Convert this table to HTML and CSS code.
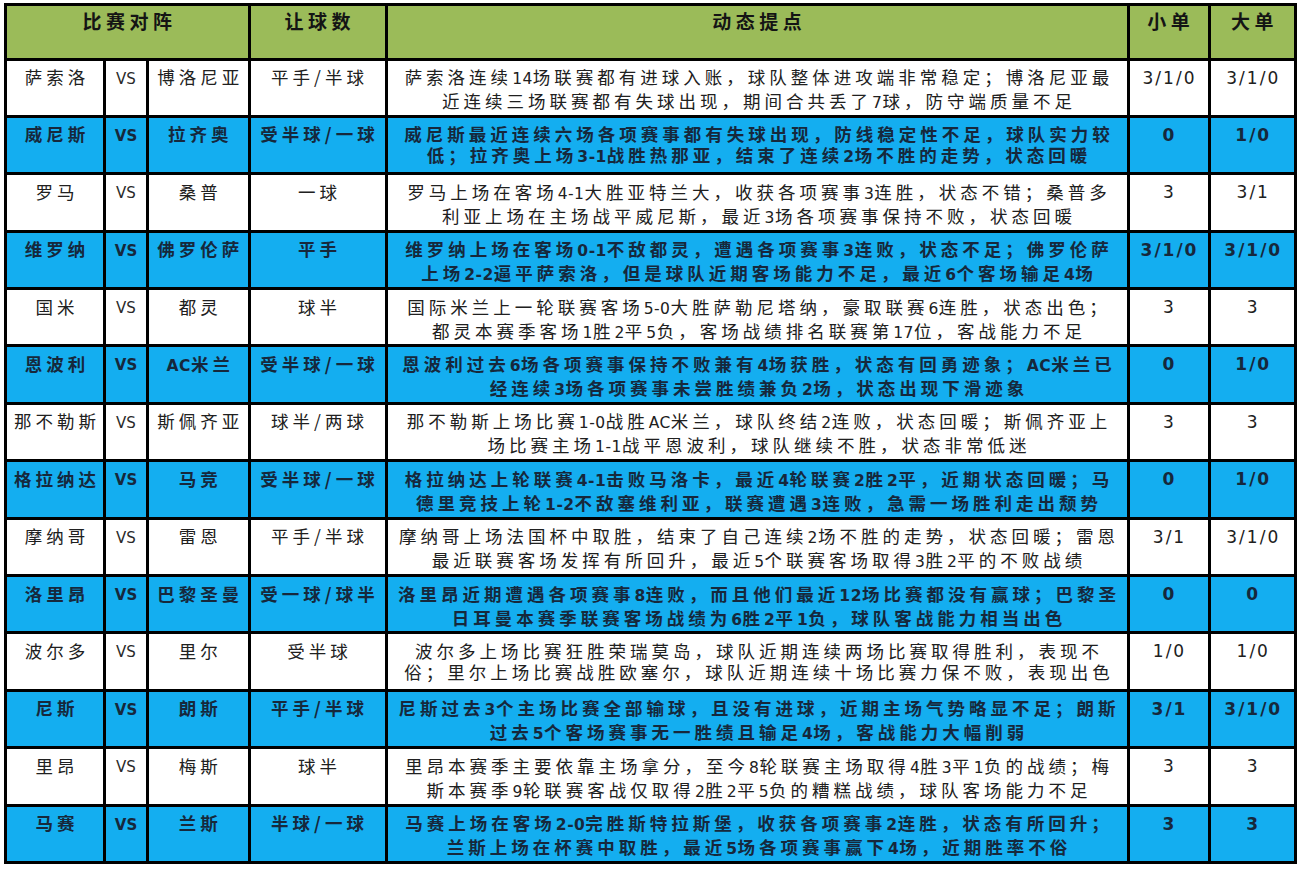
FILE: index.html
```html
<!DOCTYPE html>
<html lang="zh-CN">
<head>
<meta charset="utf-8">
<title>比赛对阵</title>
<link rel="stylesheet" href="styles.css">
</head>
<body>
<div class="board">
  <div class="row head">
    <div class="cell span3">比赛对阵</div>
    <div class="cell">让球数</div>
    <div class="cell">动态提点</div>
    <div class="cell">小单</div>
    <div class="cell">大单</div>
  </div>

  <div class="row white">
    <div class="cell">萨索洛</div><div class="cell vs">VS</div><div class="cell">博洛尼亚</div><div class="cell">平手/半球</div>
    <div class="cell desc"><span>萨索洛连续<i>14</i>场联赛都有进球入账，球队整体进攻端非常稳定；博洛尼亚最</span><span>近连续三场联赛都有失球出现，期间合共丢了<i>7</i>球，防守端质量不足</span></div>
    <div class="cell num">3/1/0</div><div class="cell num">3/1/0</div>
  </div>

  <div class="row blue">
    <div class="cell">威尼斯</div><div class="cell vs">VS</div><div class="cell">拉齐奥</div><div class="cell">受半球/一球</div>
    <div class="cell desc"><span>威尼斯最近连续六场各项赛事都有失球出现，防线稳定性不足，球队实力较</span><span>低；拉齐奥上场<i>3-1</i>战胜热那亚，结束了连续<i>2</i>场不胜的走势，状态回暖</span></div>
    <div class="cell num">0</div><div class="cell num">1/0</div>
  </div>

  <div class="row white">
    <div class="cell">罗马</div><div class="cell vs">VS</div><div class="cell">桑普</div><div class="cell">一球</div>
    <div class="cell desc"><span>罗马上场在客场<i>4-1</i>大胜亚特兰大，收获各项赛事<i>3</i>连胜，状态不错；桑普多</span><span>利亚上场在主场战平威尼斯，最近<i>3</i>场各项赛事保持不败，状态回暖</span></div>
    <div class="cell num">3</div><div class="cell num">3/1</div>
  </div>

  <div class="row blue">
    <div class="cell">维罗纳</div><div class="cell vs">VS</div><div class="cell">佛罗伦萨</div><div class="cell">平手</div>
    <div class="cell desc"><span>维罗纳上场在客场<i>0-1</i>不敌都灵，遭遇各项赛事<i>3</i>连败，状态不足；佛罗伦萨</span><span>上场<i>2-2</i>逼平萨索洛，但是球队近期客场能力不足，最近<i>6</i>个客场输足<i>4</i>场</span></div>
    <div class="cell num">3/1/0</div><div class="cell num">3/1/0</div>
  </div>

  <div class="row white">
    <div class="cell">国米</div><div class="cell vs">VS</div><div class="cell">都灵</div><div class="cell">球半</div>
    <div class="cell desc"><span>国际米兰上一轮联赛客场<i>5-0</i>大胜萨勒尼塔纳，豪取联赛<i>6</i>连胜，状态出色；</span><span>都灵本赛季客场<i>1</i>胜<i>2</i>平<i>5</i>负，客场战绩排名联赛第<i>17</i>位，客战能力不足</span></div>
    <div class="cell num">3</div><div class="cell num">3</div>
  </div>

  <div class="row blue">
    <div class="cell">恩波利</div><div class="cell vs">VS</div><div class="cell"><i>AC</i>米兰</div><div class="cell">受半球/一球</div>
    <div class="cell desc"><span>恩波利过去<i>6</i>场各项赛事保持不败兼有<i>4</i>场获胜，状态有回勇迹象；<i>AC</i>米兰已</span><span>经连续<i>3</i>场各项赛事未尝胜绩兼负<i>2</i>场，状态出现下滑迹象</span></div>
    <div class="cell num">0</div><div class="cell num">1/0</div>
  </div>

  <div class="row white">
    <div class="cell">那不勒斯</div><div class="cell vs">VS</div><div class="cell">斯佩齐亚</div><div class="cell">球半/两球</div>
    <div class="cell desc"><span>那不勒斯上场比赛<i>1-0</i>战胜<i>AC</i>米兰，球队终结<i>2</i>连败，状态回暖；斯佩齐亚上</span><span>场比赛主场<i>1-1</i>战平恩波利，球队继续不胜，状态非常低迷</span></div>
    <div class="cell num">3</div><div class="cell num">3</div>
  </div>

  <div class="row blue">
    <div class="cell">格拉纳达</div><div class="cell vs">VS</div><div class="cell">马竞</div><div class="cell">受半球/一球</div>
    <div class="cell desc"><span>格拉纳达上轮联赛<i>4-1</i>击败马洛卡，最近<i>4</i>轮联赛<i>2</i>胜<i>2</i>平，近期状态回暖；马</span><span>德里竞技上轮<i>1-2</i>不敌塞维利亚，联赛遭遇<i>3</i>连败，急需一场胜利走出颓势</span></div>
    <div class="cell num">0</div><div class="cell num">1/0</div>
  </div>

  <div class="row white">
    <div class="cell">摩纳哥</div><div class="cell vs">VS</div><div class="cell">雷恩</div><div class="cell">平手/半球</div>
    <div class="cell desc"><span>摩纳哥上场法国杯中取胜，结束了自己连续<i>2</i>场不胜的走势，状态回暖；雷恩</span><span>最近联赛客场发挥有所回升，最近<i>5</i>个联赛客场取得<i>3</i>胜<i>2</i>平的不败战绩</span></div>
    <div class="cell num">3/1</div><div class="cell num">3/1/0</div>
  </div>

  <div class="row blue">
    <div class="cell">洛里昂</div><div class="cell vs">VS</div><div class="cell">巴黎圣曼</div><div class="cell">受一球/球半</div>
    <div class="cell desc"><span>洛里昂近期遭遇各项赛事<i>8</i>连败，而且他们最近<i>12</i>场比赛都没有赢球；巴黎圣</span><span>日耳曼本赛季联赛客场战绩为<i>6</i>胜<i>2</i>平<i>1</i>负，球队客战能力相当出色</span></div>
    <div class="cell num">0</div><div class="cell num">0</div>
  </div>

  <div class="row white">
    <div class="cell">波尔多</div><div class="cell vs">VS</div><div class="cell">里尔</div><div class="cell">受半球</div>
    <div class="cell desc"><span>波尔多上场比赛狂胜荣瑞莫岛，球队近期连续两场比赛取得胜利，表现不</span><span>俗；里尔上场比赛战胜欧塞尔，球队近期连续十场比赛力保不败，表现出色</span></div>
    <div class="cell num">1/0</div><div class="cell num">1/0</div>
  </div>

  <div class="row blue">
    <div class="cell">尼斯</div><div class="cell vs">VS</div><div class="cell">朗斯</div><div class="cell">平手/半球</div>
    <div class="cell desc"><span>尼斯过去<i>3</i>个主场比赛全部输球，且没有进球，近期主场气势略显不足；朗斯</span><span>过去<i>5</i>个客场赛事无一胜绩且输足<i>4</i>场，客战能力大幅削弱</span></div>
    <div class="cell num">3/1</div><div class="cell num">3/1/0</div>
  </div>

  <div class="row white">
    <div class="cell">里昂</div><div class="cell vs">VS</div><div class="cell">梅斯</div><div class="cell">球半</div>
    <div class="cell desc"><span>里昂本赛季主要依靠主场拿分，至今<i>8</i>轮联赛主场取得<i>4</i>胜<i>3</i>平<i>1</i>负的战绩；梅</span><span>斯本赛季<i>9</i>轮联赛客战仅取得<i>2</i>胜<i>2</i>平<i>5</i>负的糟糕战绩，球队客场能力不足</span></div>
    <div class="cell num">3</div><div class="cell num">3</div>
  </div>

  <div class="row blue">
    <div class="cell">马赛</div><div class="cell vs">VS</div><div class="cell">兰斯</div><div class="cell">半球/一球</div>
    <div class="cell desc"><span>马赛上场在客场<i>2-0</i>完胜斯特拉斯堡，收获各项赛事<i>2</i>连胜，状态有所回升；</span><span>兰斯上场在杯赛中取胜，最近<i>5</i>场各项赛事赢下<i>4</i>场，近期胜率不俗</span></div>
    <div class="cell num">3</div><div class="cell num">3</div>
  </div>
</div>
</body>
</html>
```

FILE: styles.css
```css
html, body {
  margin: 0;
  padding: 0;
  background: #ffffff;
}

body {
  font-family: "Noto Sans CJK SC", "Noto Sans", sans-serif;
  padding: 3px 0 0 4px;
}

.board {
  display: grid;
  grid-template-columns: 96px 40px 98.5px 134px 739px 78px 83.5px;
  grid-template-rows: 51.5px repeat(14, 54.4px);
  gap: 3px;
  padding: 3px;
  background: #000000;
  width: max-content;
}

.row {
  display: contents;
}

.cell {
  padding-top: 5.5px;
  padding-left: 4px;
  font-size: 17.5px;
  line-height: 21px;
  letter-spacing: 4px;
  text-align: center;
  white-space: nowrap;
  overflow: hidden;
}

.cell i {
  font-style: normal;
  font-family: "DejaVu Sans", "Liberation Sans", sans-serif;
  font-size: 15.5px;
  letter-spacing: 0.5px;
}

.span3 {
  grid-column: span 3;
}

.head .cell {
  background: #9bbb59;
  color: #141414;
  font-weight: 700;
  font-size: 19px;
  padding-top: 3.5px;
  padding-left: 4.5px;
  letter-spacing: 4.5px;
}

.white .cell {
  background: #ffffff;
  color: #202020;
  font-weight: 400;
}

.blue .cell {
  background: #14aef0;
  color: #16283c;
  font-weight: 700;
}

.vs {
  font-family: "DejaVu Sans", "Liberation Sans", sans-serif;
  font-weight: 700;
  font-size: 15px;
  letter-spacing: 0;
  padding-left: 0;
  padding-top: 8px;
}

.white .vs {
  color: #2a2a2a;
}

.desc {
  display: flex;
  flex-direction: column;
  align-items: center;
}

.desc span {
  display: block;
}

.num {
  font-family: "DejaVu Sans", "Liberation Sans", sans-serif;
  font-size: 17px;
  letter-spacing: 2px;
  padding-left: 2px;
  padding-top: 7px;
}
```
